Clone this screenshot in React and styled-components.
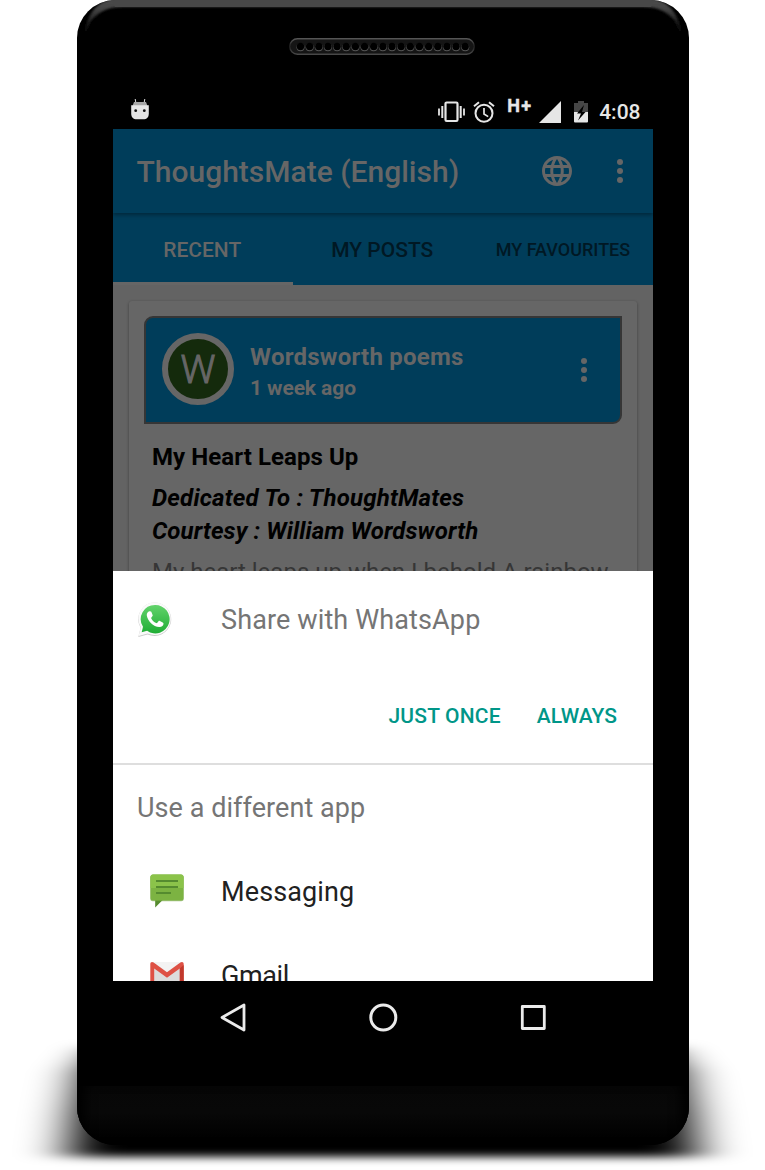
import React from "react";
import styled, { createGlobalStyle } from "styled-components";

const GlobalStyle = createGlobalStyle`
  *, *::before, *::after { box-sizing: border-box; }
  body { margin: 0; background: #fff; overflow: hidden; font-family: Roboto, "Liberation Sans", sans-serif; }
  svg { display: block; flex: none; }
`;

const Stage = styled.main`
  position: relative;
  width: 765px;
  height: 1170px;
  overflow: hidden;
  display: flex;
  align-items: flex-start;
  padding-left: 77px;
`;

const Shadow = styled.svg`
  position: absolute;
  inset: 0;
`;

const Phone = styled.div`
  position: relative;
  width: 612px;
  height: 1145px;
  border-radius: 38px;
  background: #000;
  overflow: hidden;
  display: flex;
  flex-direction: column;
  align-items: center;
`;

const Bezel = styled.svg`
  position: absolute;
  inset: 0;
`;

const Top = styled.div`
  position: relative;
  height: 93px;
  padding: 38px 2px 0 0;
`;

const Chin = styled.div`
  width: 100%;
  height: 59px;
  margin-top: auto;
  background: linear-gradient(#070707, #080808 45%, #000 92%);
  box-shadow: inset 14px 0 12px -6px #000, inset -14px 0 12px -6px #000;
`;

const Screen = styled.div`
  position: relative;
  width: 540px;
  height: 960px;
  display: flex;
  flex-direction: column;
`;

const StatusBar = styled.div`
  height: 36px;
  flex: none;
  display: flex;
  align-items: center;
  justify-content: space-between;
  padding: 0 12.5px 0 17px;

  > svg {
    margin-bottom: 4px;
  }
`;

const StatusIcons = styled.div`
  display: flex;
  align-items: center;

  > svg {
    margin-top: 1px;
  }
`;

const Space = styled.span`
  flex: none;
  width: ${(p) => p.$w}px;
`;

const Network = styled.span`
  width: 26px;
  margin: -11px 6px 0 12px;
  font-size: 18px;
  line-height: 20px;
  font-weight: 700;
  letter-spacing: 1.5px;
  color: #e6e6e6;
  display: flex;
  -webkit-text-stroke: 0.4px #e6e6e6;
`;

const Clock = styled.span`
  margin-left: 11px;
  font-size: 21px;
  font-weight: 500;
  line-height: 36px;
  padding-top: 2px;
  color: #e6e6e6;
`;

const Toolbar = styled.header`
  position: relative;
  height: 84px;
  flex: none;
  background: #003d5a;
  box-shadow: 0 2px 4px rgba(0, 0, 0, 0.35);
  display: flex;
  align-items: center;
  padding: 0 30px 0 23.5px;
  z-index: 1;
`;

const Title = styled.h1`
  flex: 1;
  margin: 0;
  padding-top: 1px;
  font-size: 30px;
  font-weight: 500;
  color: #666;
  white-space: nowrap;
`;

const Tabs = styled.nav`
  height: 72px;
  flex: none;
  display: grid;
  grid-template-columns: repeat(3, 1fr);
  background: #003d5a;
`;

const Tab = styled.div`
  display: flex;
  align-items: center;
  justify-content: center;
  padding-top: ${(p) => (p.$active ? 4 : 1)}px;
  padding-right: ${(p) => (p.$small ? 0 : 1.5)}px;
  font-size: ${(p) => (p.$small ? 18 : 21)}px;
  font-weight: 500;
  color: ${(p) => (p.$active ? "#666" : "#001824")};
  border-bottom: ${(p) => (p.$active ? "3px solid #666" : "0")};
  white-space: nowrap;
`;

const Feed = styled.section`
  height: 286px;
  flex: none;
  overflow: hidden;
  background: #636363;
  padding: 16px 16px 0;
`;

const Card = styled.article`
  height: 400px;
  border-radius: 3px;
  background: #666;
  box-shadow: 0 1px 3px rgba(0, 0, 0, 0.4);
  padding: 15px 15px 0;
`;

const CardHeader = styled.div`
  height: 108px;
  border: 2px solid #363636;
  border-radius: 9px 0;
  background: #003d5a;
  display: flex;
  align-items: center;
  padding: 0 33px 2px 16px;

  > svg {
    margin-top: 2px;
  }
`;

const Avatar = styled.div`
  width: 72px;
  height: 72px;
  border: 6px solid #666;
  border-radius: 50%;
  background: #142a0c;
  color: #666;
  font-size: 39px;
  font-weight: 300;
  -webkit-text-stroke: 1px #666;
  padding-top: 1px;
  display: flex;
  align-items: center;
  justify-content: center;
`;

const Author = styled.div`
  flex: 1;
  padding: 8px 0 0 16px;
  color: #666;
  font-weight: 700;
  line-height: 31px;
`;

const AuthorName = styled.div`
  font-size: 24px;
  letter-spacing: 0.24px;
`;

const Age = styled.div`
  font-size: 21px;
  letter-spacing: -0.1px;
`;

const PostText = styled.div`
  padding: 17px 0 0 8px;
  font-size: 24px;
  line-height: 33px;
  color: #000;
  white-space: nowrap;
`;

const PostTitle = styled.div`
  font-weight: 700;
  letter-spacing: 0.07px;
  margin-bottom: 8px;
`;

const PostMeta = styled.div`
  font-weight: 700;
  font-style: italic;
  letter-spacing: ${(p) => p.$track}px;
`;

const PostBody = styled.p`
  margin: 8px 0 0;
  color: #363636;
`;

const Sheet = styled.section`
  height: 410px;
  flex: none;
  overflow: hidden;
  background: #fff;
`;

const Row = styled.div`
  height: ${(p) => p.$h}px;
  display: flex;
  align-items: center;
  padding-left: ${(p) => p.$left}px;
`;

const Label = styled.span`
  margin-left: ${(p) => p.$gap || 0}px;
  padding-top: ${(p) => p.$drop || 0}px;
  font-size: 27px;
  letter-spacing: ${(p) => p.$track || 0}px;
  color: ${(p) => (p.$strong ? "#212121" : "#757575")};
`;

const Actions = styled.div`
  height: 96px;
  border-bottom: 2px solid #dedede;
  display: flex;
  align-items: flex-start;
  justify-content: flex-end;
  gap: 36px;
  padding-right: 36px;
`;

const Action = styled.button`
  height: 94px;
  padding: 0;
  border: 0;
  background: none;
  font: 500 21px Roboto, sans-serif;
  letter-spacing: ${(p) => p.$track || 0}px;
  color: #009688;
`;

const NavBar = styled.footer`
  height: 72px;
  flex: none;
  display: flex;
  justify-content: center;
  align-items: center;
  gap: 120px;
`;

const Dots = () => (
  <svg width="6" height="24" viewBox="0 0 6 24" fill="#666">
    <circle cx="3" cy="3" r="3" />
    <circle cx="3" cy="12" r="3" />
    <circle cx="3" cy="21" r="3" />
  </svg>
);

const Speaker = () => (
  <svg width="186" height="17" viewBox="0 0 186 17">
    <defs>
      <linearGradient id="spk" x1="0" y1="0" x2="0" y2="1">
        <stop offset="0" stopColor="#555" />
        <stop offset=".5" stopColor="#222" />
        <stop offset="1" stopColor="#484848" />
      </linearGradient>
    </defs>
    <rect x=".8" y=".8" width="184.4" height="15.4" rx="7.7" fill="#151515" stroke="url(#spk)" strokeWidth="1.4" />
    {Array.from({ length: 19 }, (_, i) => (
      <g key={i}>
        <circle cx={11.5 + i * 9.15} cy="9.2" r="4" fill="#585858" />
        <circle cx={11.5 + i * 9.15} cy="8.5" r="3.7" fill="#000" />
      </g>
    ))}
  </svg>
);

const Droid = () => (
  <svg width="20" height="22" viewBox="0 0 20 22">
    <path d="M5.8 4.5 5.200 1M14.2 4.5 14.800 1" stroke="#ddd" strokeWidth="1" />
    <path d="M4 4h12l1.500 4h-15z" fill="#a6a6a6" />
    <path d="M1.200 7.200h17.600v8c0 4-2 6-5.500 6H6.700c-3.500 0-5.500-2-5.500-6z" fill="#e6e6e6" />
    <circle cx="5.700" cy="12.700" r="1.400" fill="#111" />
    <circle cx="14.300" cy="12.700" r="1.400" fill="#111" />
  </svg>
);

const Vibrate = () => (
  <svg width="27" height="22" viewBox="0 0 27 22" stroke="#e6e6e6" fill="none">
    <rect x="7.500" y="1.500" width="12" height="18.500" rx="1.200" strokeWidth="2.200" />
    <path d="M4.300 5v12M22.700 5v12" strokeWidth="2" />
    <path d="M1 7.500v7M26 7.500v7" strokeWidth="1.800" />
  </svg>
);

const Alarm = () => (
  <svg width="22" height="22" viewBox="0 0 22 22" stroke="#e6e6e6" fill="none">
    <circle cx="11" cy="12.300" r="8.500" strokeWidth="2" />
    <path d="M11 7v6l4.200 2.600" strokeWidth="1.700" />
    <path d="M1 5.300 6 1.200M21 5.300 16 1.200" strokeWidth="2" />
  </svg>
);

const Signal = () => (
  <svg width="22" height="22" viewBox="0 0 22 22">
    <path d="M22 0v22H0z" fill="#e6e6e6" />
  </svg>
);

const Battery = () => (
  <svg width="14" height="22" viewBox="0 0 14 22">
    <path d="M4 0h6v2h4v9H0V2h4z" fill="#464646" />
    <path d="M0 11h14v9.500q0 1-1 1H1q-1 0-1-1z" fill="#e6e6e6" />
    <path d="M10 4 3 12.500h4L4 19.500l7.500-8.500H8z" fill="#000" />
  </svg>
);

const Globe = () => (
  <svg width="30" height="30" viewBox="2 2 20 20" fill="#666">
    <path d="M11.990 2C6.470 2 2 6.480 2 12s4.470 10 9.990 10C17.520 22 22 17.520 22 12S17.520 2 11.990 2zm6.930 6h-2.950c-.320-1.250-.780-2.450-1.380-3.560 1.840.630 3.370 1.910 4.330 3.560zM12 4.040c.830 1.200 1.480 2.530 1.910 3.960h-3.820c.430-1.430 1.080-2.760 1.910-3.960zM4.260 14C4.100 13.360 4 12.690 4 12s.100-1.360.260-2h3.380c-.080.660-.140 1.320-.140 2 0 .680.060 1.340.140 2H4.260zm.820 2h2.950c.320 1.250.780 2.450 1.380 3.560-1.840-.630-3.370-1.900-4.330-3.560zm2.950-8H5.080c.960-1.660 2.490-2.930 4.330-3.560C8.810 5.550 8.350 6.750 8.030 8zM12 19.960c-.830-1.200-1.480-2.530-1.910-3.960h3.820c-.430 1.430-1.080 2.760-1.910 3.960zM14.340 14H9.660c-.090-.660-.160-1.320-.160-2 0-.680.070-1.350.160-2h4.680c.090.650.160 1.320.160 2 0 .680-.070 1.340-.160 2zm.250 5.560c.600-1.110 1.060-2.310 1.380-3.560h2.950c-.960 1.650-2.490 2.930-4.330 3.560zM16.360 14c.080-.660.140-1.320.140-2 0-.680-.060-1.340-.140-2h3.380c.160.640.260 1.310.260 2s-.100 1.360-.260 2h-3.380z" />
  </svg>
);

const WhatsApp = () => (
  <svg width="36" height="38" viewBox="0 0 36 38">
    <defs>
      <linearGradient id="wa" x1="0" y1="0" x2="0" y2="1">
        <stop offset="0" stopColor="#62d36b" />
        <stop offset="1" stopColor="#1fad35" />
      </linearGradient>
    </defs>
    <path d="M18 1.500A16.700 16.700 0 0 0 3.600 26.700L1.300 36l9.300-2.600A16.700 16.700 0 1 0 18 1.500z" fill="#b8b8b8" opacity=".75" />
    <path d="M18 1.300A16.400 16.400 0 0 0 3.900 26.200L1.600 35l9-2.400A16.400 16.400 0 1 0 18 1.300z" fill="#fafafa" />
    <path d="M18 4A14.200 14.200 0 0 0 6 25.800L4.700 31.200l5.400-1.500A14.200 14.200 0 1 0 18 4z" fill="url(#wa)" />
    <path d="M12.400 10.200c-1.500.2-2.900 2.100-2.600 4.300.8 5.600 6.400 11.200 12.500 11.600 2.500.1 4.200-1.600 4.200-3.400 0-.6-.3-.9-.8-1.200l-2.800-1.500c-.6-.3-1-.2-1.400.3l-1.200 1.500c-.3.4-.7.5-1.200.3-2.100-.9-3.700-2.500-4.800-4.500-.2-.4-.2-.7.100-1.100l1.100-1.400c.3-.4.300-.7.100-1.200l-1.300-3.100c-.3-.6-.9-.7-1.900-.6z" fill="#fff" />
  </svg>
);

const MessageIcon = () => (
  <svg width="36" height="36" viewBox="0 0 36 36">
    <path d="M6.200 25h9.500L6.200 34.500z" fill="#558b2f" />
    <rect x="1.300" y="2.300" width="33.400" height="25.900" rx="2.500" fill="#6a9b3a" opacity=".6" />
    <rect x="1.500" y="1.500" width="33" height="26" rx="2.500" fill="#7cb342" />
    <path d="M4 1.500h28a2.500 2.500 0 0 1 2.500 2.500v11h-33V4A2.500 2.500 0 0 1 4 1.500z" fill="#8bc34a" />
    <path d="M7 8h22M7 14h22M7 20h15" stroke="#558b2f" strokeWidth="2.200" />
  </svg>
);

const GmailIcon = () => (
  <svg width="36" height="28" viewBox="0 0 36 28">
    <path d="M3 1h30l1 26H2z" fill="#e8e8e8" />
    <path d="M4 1h28L18 11z" fill="#f3f3f3" />
    <path d="M4.500 7 18 17l13.500-10v20h-27z" fill="#dcdcdc" />
    <path d="M1.300 3v23q0 1.500 1.500 1.500h2.400V7.600L18 16.700l12.800-9.100v19.900h2.400q1.500 0 1.500-1.500V3c0-2-1.700-2.600-3.300-1.500L18 11.200 4.600 1.500C3 .4 1.300 1 1.300 3z" fill="#de5145" />
    <path d="M30.800 7.600 34.700 4v23.500h-3.900z" fill="#c1392c" />
  </svg>
);

export default function App() {
  return (
    <Stage>
      <GlobalStyle />
      <Shadow width="765" height="1170">
        <defs>
          <filter id="soft" x="-20%" y="-40%" width="140%" height="180%">
            <feGaussianBlur stdDeviation="24 4.500" />
          </filter>
        </defs>
        <path d="M105 1047H661L682 1072 691 1115 697 1157H68L74 1115 83 1072z" fill="#000" filter="url(#soft)" />
      </Shadow>
      <Phone>
        <Bezel width="612" height="130">
          <defs>
            <linearGradient id="rim" x1="0" y1="0" x2="0" y2="1">
              <stop offset="0" stopColor="#4c4c4c" />
              <stop offset=".25" stopColor="#444" />
              <stop offset=".55" stopColor="#1e1e1e" />
              <stop offset="1" stopColor="#000" />
            </linearGradient>
            <filter id="rimSoft">
              <feGaussianBlur stdDeviation=".9" />
            </filter>
          </defs>
          <path
            d="M7 40C8 18 18 -1 40 -1H572C594 -1 604 18 605 40 601 19 589 7 567 7H45C23 7 11 19 7 40z"
            fill="url(#rim)"
            filter="url(#rimSoft)"
          />
          <path d="M34 0H578L574 7H38z" fill="#484848" />
        </Bezel>
        <Top>
          <Speaker />
        </Top>
        <Screen>
          <StatusBar>
            <Droid />
            <StatusIcons>
              <Vibrate />
              <Space $w={8.5} />
              <Alarm />
              <Network>H+</Network>
              <Signal />
              <Space $w={13} />
              <Battery />
              <Clock>4:08</Clock>
            </StatusIcons>
          </StatusBar>
          <Toolbar>
            <Title>ThoughtsMate (English)</Title>
            <Globe />
            <Space $w={45} />
            <Dots />
          </Toolbar>
          <Tabs>
            <Tab $active>RECENT</Tab>
            <Tab>MY POSTS</Tab>
            <Tab $small>MY FAVOURITES</Tab>
          </Tabs>
          <Feed>
            <Card>
              <CardHeader>
                <Avatar>W</Avatar>
                <Author>
                  <AuthorName>Wordsworth poems</AuthorName>
                  <Age>1 week ago</Age>
                </Author>
                <Dots />
              </CardHeader>
              <PostText>
                <PostTitle>My Heart Leaps Up</PostTitle>
                <PostMeta $track={0.2}>Dedicated To : ThoughtMates</PostMeta>
                <PostMeta $track={0.1}>Courtesy : William Wordsworth</PostMeta>
                <PostBody>My heart leaps up when I behold A rainbow</PostBody>
              </PostText>
            </Card>
          </Feed>
          <Sheet>
            <Row $h={98} $left={24}>
              <WhatsApp />
              <Label $gap={48} $track={0.13}>Share with WhatsApp</Label>
            </Row>
            <Actions>
              <Action $track={0.2}>JUST ONCE</Action>
              <Action>ALWAYS</Action>
            </Actions>
            <Row $h={84} $left={24}>
              <Label $drop={2} $track={0.06}>Use a different app</Label>
            </Row>
            <Row $h={84} $left={36}>
              <MessageIcon />
              <Label $gap={36} $drop={2} $track={0.12} $strong>Messaging</Label>
            </Row>
            <Row $h={84} $left={36}>
              <GmailIcon />
              <Label $gap={36} $drop={2} $track={-0.4} $strong>Gmail</Label>
            </Row>
          </Sheet>
          <NavBar>
            <svg width="30" height="30" viewBox="0 0 30 30" fill="none" stroke="#ebebeb" strokeWidth="2.800" strokeLinejoin="round">
              <path d="M26 3v25L4 15.500z" />
            </svg>
            <svg width="30" height="30" viewBox="0 0 30 30" fill="none" stroke="#ebebeb" strokeWidth="3">
              <circle cx="15.300" cy="15.500" r="12.500" />
            </svg>
            <svg width="30" height="30" viewBox="0 0 30 30" fill="none" stroke="#ebebeb" strokeWidth="2.800" strokeLinejoin="round">
              <rect x="4.300" y="4.500" width="22" height="22" />
            </svg>
          </NavBar>
        </Screen>
        <Chin />
      </Phone>
    </Stage>
  );
}
